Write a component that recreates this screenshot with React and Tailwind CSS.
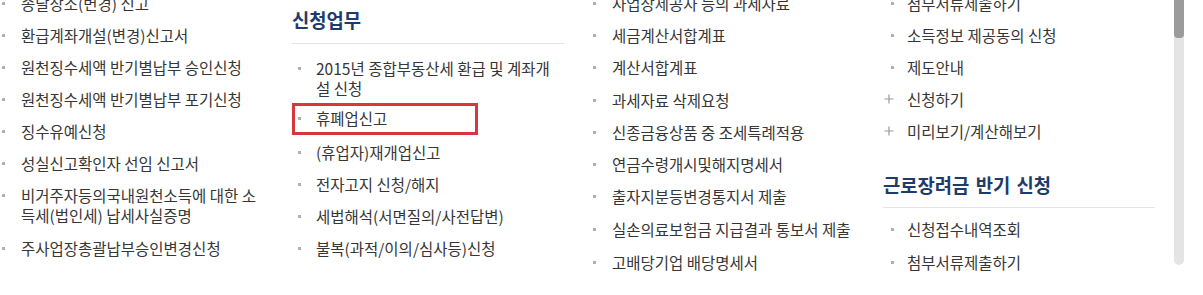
import React from "react";

const font = { fontFamily: '"Noto Sans CJK KR", "Noto Sans", sans-serif' };

const Bullet = ({ w, ml }) => (
  <span className={`flex shrink-0 items-start pt-[9px] ${w}`}>
    <span className={`block h-[3px] w-[3px] bg-[#b0b0b0] ${ml}`} />
  </span>
);

const Cross = () => (
  <span className="flex w-[24px] shrink-0 items-start pt-[5px]">
    <svg width="10" height="10" viewBox="0 0 10 10" className="ml-[1px]">
      <path d="M5 0.5v9M0.5 5h9" stroke="#9a9a9a" strokeWidth="1.2" />
    </svg>
  </span>
);

const Item = ({ children, w, ml, cross, className = "" }) => (
  <li className={`flex leading-[20px] mb-[12px] ${className}`}>
    {cross ? <Cross /> : <Bullet w={w} ml={ml} />}
    <span className="whitespace-nowrap">{children}</span>
  </li>
);

const Heading = ({ children, className = "" }) => (
  <h3
    className={`w-[272px] border-b border-[#e3e3e3] pb-[10px] text-[18.8px] font-bold leading-[24px] text-[#1f3b6b] ${className}`}
  >
    {children}
  </h3>
);

const App = () => {
  const c1 = { w: "w-[21px]", ml: "ml-[2px]" };
  const c2 = { w: "w-[20px]", ml: "ml-[2px]" };
  const c3 = { w: "w-[20px]", ml: "ml-[1px]" };
  const c4 = { w: "w-[24px]", ml: "ml-[8px]" };

  return (
    <div
      className="flex h-[295px] w-[1203px] overflow-hidden bg-white text-[15.5px] text-[#363636]"
      style={font}
    >
      <div className="flex w-[1174px]">
        {/* column 1 */}
        <ul className="mt-[-7px] w-[292px]">
          <Item {...c1}>송달장소(변경) 신고</Item>
          <Item {...c1}>환급계좌개설(변경)신고서</Item>
          <Item {...c1}>원천징수세액 반기별납부 승인신청</Item>
          <Item {...c1}>원천징수세액 반기별납부 포기신청</Item>
          <Item {...c1}>징수유예신청</Item>
          <Item {...c1}>성실신고확인자 선임 신고서</Item>
          <Item {...c1} className="mb-[13px]">
            비거주자등의국내원천소득에 대한 소
            <br />
            득세(법인세) 납세사실증명
          </Item>
          <Item {...c1}>주사업장총괄납부승인변경신청</Item>
        </ul>

        {/* column 2 */}
        <div className="w-[300px] pt-[8px]">
          <Heading className="w-[271px] pb-[11px]">신청업무</Heading>
          <ul className="mt-[14px] pl-[4px]">
            <Item {...c2}>
              2015년 종합부동산세 환급 및 계좌개
              <br />
              설 신청
            </Item>
            <li className="-ml-[4px] mt-[-7px] mb-[7px] flex w-[186px] border-[3px] border-[#d9373f] pl-[1px] pt-[2px] pb-[4px] leading-[20px]">
              <Bullet {...c2} />
              <span>휴폐업신고</span>
            </li>
            <Item {...c2}>(휴업자)재개업신고</Item>
            <Item {...c2}>전자고지 신청/해지</Item>
            <Item {...c2}>세법해석(서면질의/사전답변)</Item>
            <Item {...c2}>불복(과적/이의/심사등)신청</Item>
          </ul>
        </div>

        {/* column 3 */}
        <ul className="mt-[-7px] w-[291px]">
          <Item {...c3}>사업장제공자 등의 과세자료</Item>
          <Item {...c3}>세금계산서합계표</Item>
          <Item {...c3} className="mb-[13px]">계산서합계표</Item>
          <Item {...c3}>과세자료 삭제요청</Item>
          <Item {...c3}>신종금융상품 중 조세특례적용</Item>
          <Item {...c3}>연금수령개시및해지명세서</Item>
          <Item {...c3} className="mb-[13px]">출자지분등변경통지서 제출</Item>
          <Item {...c3} className="mb-[13px]">실손의료보험금 지급결과 통보서 제출</Item>
          <Item {...c3}>고배당기업 배당명세서</Item>
        </ul>

        {/* column 4 */}
        <div className="flex-1">
          <ul className="mt-[-7px]">
            <Item {...c4}>첨부서류제출하기</Item>
            <Item {...c4}>소득정보 제공동의 신청</Item>
            <Item {...c4}>제도안내</Item>
            <Item cross>신청하기</Item>
            <Item cross>미리보기/계산해보기</Item>
          </ul>
          <Heading className="mt-[32px] [word-spacing:2px]">근로장려금 반기 신청</Heading>
          <ul className="mt-[11px]">
            <Item {...c4} className="mb-[13px]">신청접수내역조회</Item>
            <Item {...c4}>첨부서류제출하기</Item>
          </ul>
        </div>
      </div>

      {/* scrollbar */}
      <div className="flex h-[265px] w-[10px] flex-col rounded-b-full bg-[#e4e4e4]">
        <div className="h-[38px] w-full rounded-b-[4px] bg-[#9b9b9b]" />
      </div>
    </div>
  );
};

export default App;
